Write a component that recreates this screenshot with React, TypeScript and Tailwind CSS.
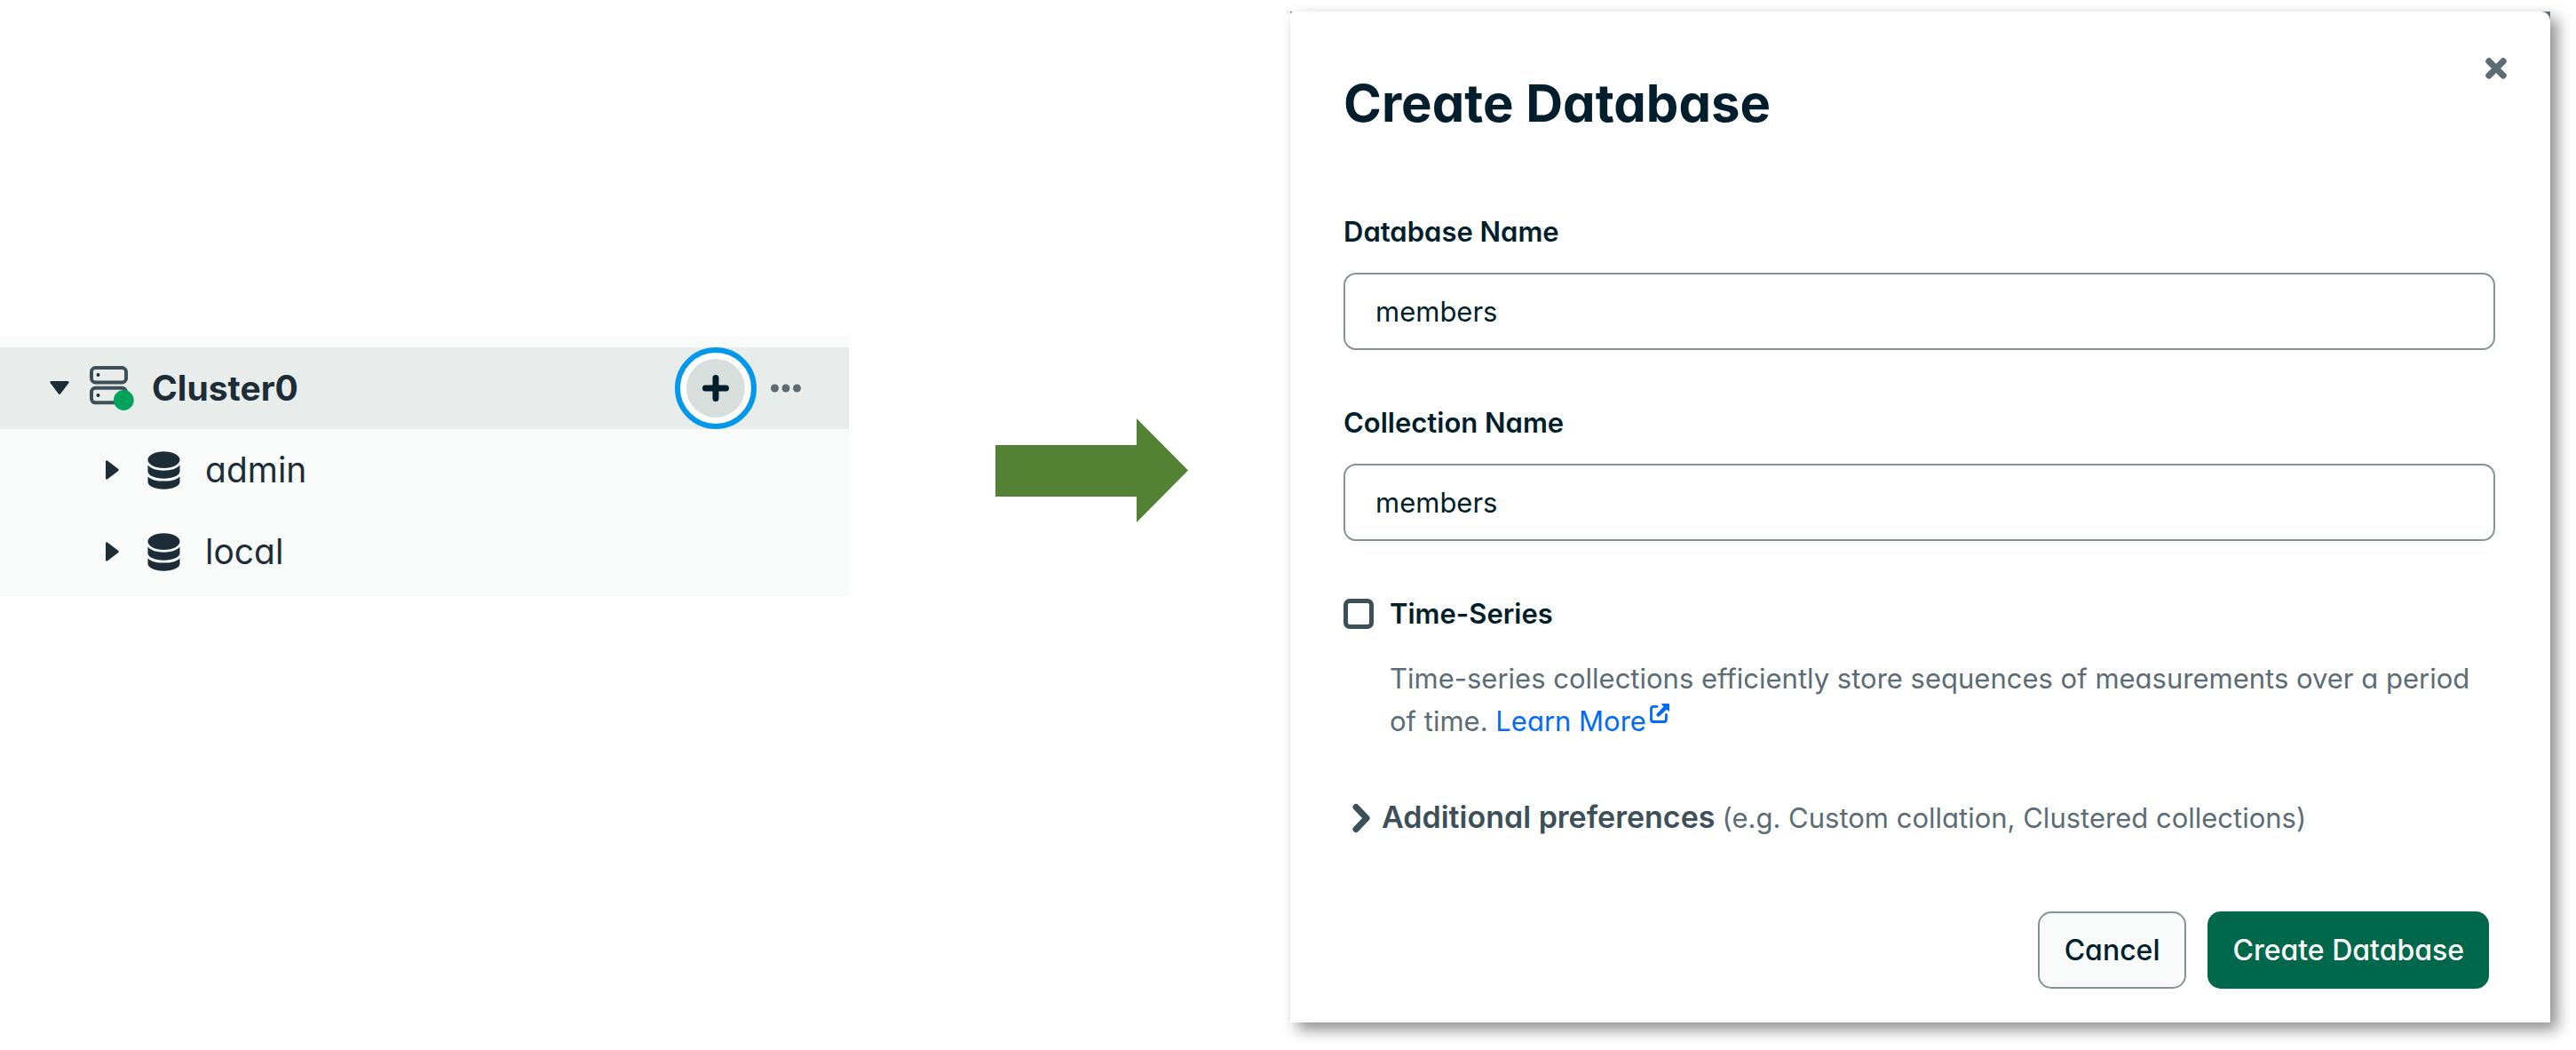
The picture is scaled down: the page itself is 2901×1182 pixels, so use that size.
import React, { useState } from "react";

function CaretDown() {
  return (
    <svg width="22" height="16" viewBox="0 0 22 16" fill="currentColor" aria-hidden="true">
      <path d="M1.6 0H20.4Q22.4 .4 21.3 2.2L12.2 14.2Q11 15.8 9.8 14.2L.7 2.2Q-.4 .4 1.6 0Z" />
    </svg>
  );
}

function CaretRight() {
  return (
    <svg width="15" height="22" viewBox="0 0 15 22" fill="currentColor" aria-hidden="true">
      <path d="M0 1.6V20.4Q.4 22.4 2.2 21.3L14 12.2Q15.6 11 14 9.8L2.2 .7Q.4 -.4 0 1.6Z" />
    </svg>
  );
}

function ClusterIcon() {
  return (
    <svg width="50" height="50" viewBox="0 0 50 50" fill="none" aria-hidden="true">
      <rect x="2" y="2" width="39" height="16.5" rx="4.5" stroke="#3d4f58" strokeWidth="4" />
      <rect x="2" y="24.8" width="39" height="16.5" rx="4.5" stroke="#3d4f58" strokeWidth="4" />
      <circle cx="9.5" cy="10" r="2" fill="#1c2d38" />
      <circle cx="9.5" cy="33" r="2" fill="#1c2d38" />
      <circle cx="38.3" cy="38.5" r="11.4" fill="#00a35c" />
    </svg>
  );
}

function DatabaseIcon() {
  return (
    <svg width="37" height="43" viewBox="0 0 37 43" fill="currentColor" aria-hidden="true">
      <ellipse cx="18.5" cy="9.6" rx="18" ry="9.4" />
      <path d="M.5 15.6C4 19.8 10.5 21.8 18.5 21.8S33 19.8 36.5 15.6V22.8C36.5 27 29 30.8 18.5 30.8S.5 27 .5 22.8Z" />
      <path d="M.5 28.4C4 32 10.5 33.6 18.5 33.6S33 32 36.5 28.4V34.6C36.5 39 29 42.8 18.5 42.8S.5 39 .5 34.6Z" />
    </svg>
  );
}

function PlusIcon() {
  return (
    <svg width="30" height="30" viewBox="0 0 30 30" stroke="currentColor" strokeWidth="7" strokeLinecap="round" aria-hidden="true">
      <path d="M15 3.5V26.5M3.5 15H26.5" />
    </svg>
  );
}

function EllipsisIcon() {
  return (
    <svg width="34" height="10" viewBox="0 0 34 10" fill="currentColor" aria-hidden="true">
      <circle cx="4.5" cy="5" r="4.5" />
      <circle cx="17" cy="5" r="4.5" />
      <circle cx="29.5" cy="5" r="4.5" />
    </svg>
  );
}

function CloseIcon() {
  return (
    <svg width="24" height="24" viewBox="0 0 24 24" stroke="currentColor" strokeWidth="7.4" strokeLinecap="round" aria-hidden="true">
      <path d="M4 4L20 20M20 4L4 20" />
    </svg>
  );
}

function ChevronRight() {
  return (
    <svg width="22" height="34" viewBox="0 0 22 34" fill="none" stroke="currentColor" strokeWidth="7" strokeLinecap="round" strokeLinejoin="round" aria-hidden="true">
      <path d="M5 4.5L17 17L5 29.5" />
    </svg>
  );
}

function OpenNewTabIcon() {
  return (
    <svg width="22" height="22" viewBox="0 0 22 22" aria-hidden="true">
      <path d="M8 3.4H4.2Q1.5 3.4 1.5 6V18Q1.5 20.5 4 20.5H16Q18.4 20.5 18.4 18V12.5" fill="none" stroke="currentColor" strokeWidth="2.8" strokeLinecap="round" />
      <path d="M12.8 0H21Q22 0 22 1V9L18.8 6.8L10.6 14.4Q9.2 15.2 8 14Q6.8 12.8 7.8 11.4L15.4 3.4Z" fill="currentColor" />
    </svg>
  );
}

function ArrowShape() {
  return (
    <svg width="217" height="117" viewBox="0 0 217 117" fill="#548235" aria-hidden="true">
      <path d="M0 30H159V0L217 58.5L159 117V88H0Z" />
    </svg>
  );
}

function DatabaseRow({ name }: { name: string }) {
  return (
    <li className="flex h-[92px] items-center pl-[119px]">
      <button type="button" aria-label={`Expand ${name}`}>
        <CaretRight />
      </button>
      <span className="ml-8">
        <DatabaseIcon />
      </span>
      <span className="ml-7">{name}</span>
    </li>
  );
}

function Sidebar() {
  return (
    <nav className="mt-[378px] bg-[#f9fbfa] pt-[13px] pb-[4px] text-[39px] leading-12 text-[#1c2d38]">
      <div className="flex h-[92px] items-center bg-[#e8edeb] pr-[54px] pl-14">
        <button type="button" aria-label="Collapse Cluster0">
          <CaretDown />
        </button>
        <span className="ml-[23px]">
          <ClusterIcon />
        </span>
        <span className="ml-5 font-bold">Cluster0</span>
        <button
          type="button"
          aria-label="Create database"
          className="ml-auto flex size-[92px] items-center justify-center rounded-full border-6 border-[#0498ec] bg-white text-[#001e2b]"
        >
          <span className="flex size-[66px] items-center justify-center rounded-full bg-[#d8dedc]">
            <PlusIcon />
          </span>
        </button>
        <button type="button" aria-label="More actions" className="ml-4 text-[#5c6c75]">
          <EllipsisIcon />
        </button>
      </div>
      <ul>
        <DatabaseRow name="admin" />
        <DatabaseRow name="local" />
      </ul>
    </nav>
  );
}

function TextField({ id, label }: { id: string; label: string }) {
  const [value, setValue] = useState("members");
  return (
    <div>
      <label htmlFor={id} className="block leading-10 font-semibold">
        {label}
      </label>
      <input
        id={id}
        type="text"
        value={value}
        onChange={(e) => setValue(e.target.value)}
        className="mt-[26px] block h-[87px] w-full rounded-[14px] border-2 border-[#889397] bg-white px-[34px]"
      />
    </div>
  );
}

function CreateDatabaseDialog() {
  return (
    <div
      role="dialog"
      aria-labelledby="dialog-title"
      className="mt-[13px] bg-[#5c6c75] shadow-[8px_8px_16px_rgba(0,0,0,0.45)]"
    >
      <form
        onSubmit={(e) => e.preventDefault()}
        className="relative rounded-tl-[4px] rounded-tr-[10px] bg-white pt-[67px] pr-[62px] pb-[38px] pl-15 text-[31px] text-[#001e2b]"
      >
        <button type="button" aria-label="Close" className="absolute top-[52px] right-[49px] text-[#5c6c75]">
          <CloseIcon />
        </button>
        <h1 id="dialog-title" className="text-[58px] leading-[72px] font-bold">
          Create Database
        </h1>
        <div className="mt-[89px] flex flex-col gap-[62px]">
          <TextField id="database-name" label="Database Name" />
          <TextField id="collection-name" label="Collection Name" />
          <div>
            <div className="flex items-center gap-[18px]">
              <input
                id="time-series"
                type="checkbox"
                className="size-[34px] appearance-none rounded-[7px] border-[5px] border-[#3d4f58] bg-white"
              />
              <label htmlFor="time-series" className="leading-10 font-semibold">
                Time-Series
              </label>
            </div>
            <p className="mt-[29px] pr-5 pl-[52px] leading-12 text-[#5c6c75]">
              Time-series collections efficiently store sequences of measurements over a period of time.{" "}
              <a href="#learn-more" className="inline-flex gap-1 text-[#016bf8]">
                Learn More
                <span className="flex pt-1">
                  <OpenNewTabIcon />
                </span>
              </a>
            </p>
          </div>
        </div>
        <button type="button" aria-expanded="false" className="mt-16 ml-[9px] flex items-baseline leading-10">
          <span className="self-center text-[#3d4f58]">
            <ChevronRight />
          </span>
          <span className="ml-3 text-[34px] font-semibold text-[#3d4f58]">Additional preferences</span>
          <span className="ml-2 text-[#5c6c75]">(e.g. Custom collation, Clustered collections)</span>
        </button>
        <div className="mt-[85px] mr-[7px] flex justify-end gap-6 text-[32px] font-medium">
          <button type="button" className="h-[87px] rounded-[15px] border-2 border-[#889397] bg-[#f9fbfa] px-7">
            Cancel
          </button>
          <button type="submit" className="h-[87px] rounded-[15px] bg-[#00684a] px-7 text-white">
            Create Database
          </button>
        </div>
      </form>
    </div>
  );
}

export default function App() {
  return (
    <main className="grid min-h-screen grid-cols-[956fr_497fr_1419fr] items-start bg-white pr-[29px] font-[Inter,sans-serif] [font-feature-settings:'cv11']">
      <Sidebar />
      <div className="mt-[471px] flex justify-end pr-[115px]">
        <ArrowShape />
      </div>
      <CreateDatabaseDialog />
    </main>
  );
}
